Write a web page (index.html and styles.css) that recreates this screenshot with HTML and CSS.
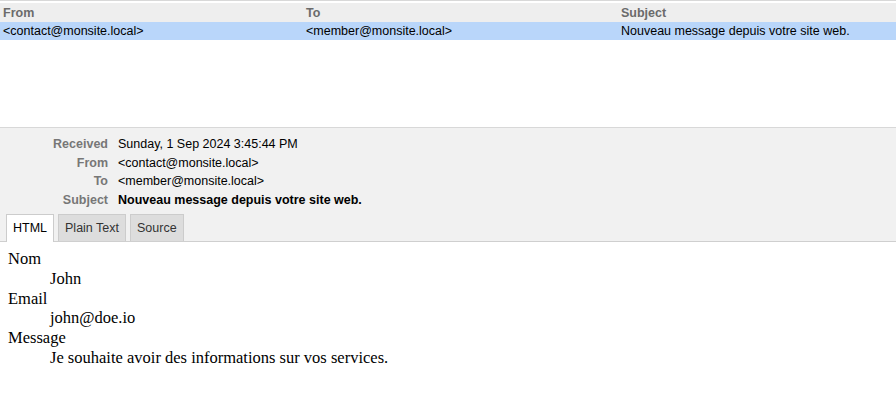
FILE: index.html
```html
<!DOCTYPE html>
<html>
<head>
<meta charset="utf-8">
<link rel="stylesheet" href="styles.css">
</head>
<body>
<div class="list">
  <div class="list-head">
    <div class="col c-from">From</div>
    <div class="col c-to">To</div>
    <div class="col c-subj">Subject</div>
  </div>
  <div class="list-row selected">
    <div class="col c-from">&lt;contact@monsite.local&gt;</div>
    <div class="col c-to">&lt;member@monsite.local&gt;</div>
    <div class="col c-subj">Nouveau message depuis votre site web.</div>
  </div>
</div>
<div class="details">
  <div class="meta">
    <div class="label">Received</div><div class="value">Sunday, 1 Sep 2024 3:45:44 PM</div>
    <div class="label">From</div><div class="value">&lt;contact@monsite.local&gt;</div>
    <div class="label">To</div><div class="value">&lt;member@monsite.local&gt;</div>
    <div class="label">Subject</div><div class="value strong">Nouveau message depuis votre site web.</div>
  </div>
  <div class="tabs">
    <div class="tab active">HTML</div>
    <div class="tab">Plain Text</div>
    <div class="tab">Source</div>
  </div>
</div>
<div class="body">
  <dl>
    <dt>Nom</dt>
    <dd>John</dd>
    <dt>Email</dt>
    <dd>john@doe.io</dd>
    <dt>Message</dt>
    <dd>Je souhaite avoir des informations sur vos services.</dd>
  </dl>
</div>
</body>
</html>
```
FILE: styles.css
```css
html, body {
  margin: 0;
  padding: 0;
  background: #fff;
}
body {
  width: 896px;
  height: 408px;
  overflow: hidden;
  font-family: "Liberation Sans", Arial, sans-serif;
  font-size: 12.5px;
  color: #000;
}
.list {
  height: 127px;
  border-top: 1px solid #d8d8d8;
  padding-top: 2px;
  box-sizing: border-box;
  background: #fff;
}
.list-head, .list-row {
  display: flex;
  height: 19px;
  align-items: center;
}
.list-head {
  background: #eeeeee;
  font-weight: bold;
  color: #6b6b6b;
}
.list-row.selected {
  background: #b9d6fa;
  height: 18px;
}
.col {
  padding-left: 3px;
  white-space: nowrap;
  overflow: hidden;
}
.c-from { width: 300px; }
.c-to { width: 312px; }
.c-subj { flex: 1; }
.details {
  background: #f1f1f1;
  border-top: 1px solid #d8d8d8;
  border-bottom: 1px solid #cfcfcf;
  padding-top: 7px;
  height: 115px;
  box-sizing: border-box;
  display: flex;
  flex-direction: column;
}
.meta {
  display: grid;
  grid-template-columns: 108px 1fr;
  column-gap: 10px;
  row-gap: 0;
  line-height: 18.5px;
}
.label {
  text-align: right;
  font-weight: bold;
  color: #777;
}
.value.strong {
  font-weight: bold;
}
.tabs {
  display: flex;
  gap: 4px;
  padding-left: 6px;
  margin-top: auto;
}
.tab {
  height: 26px;
  line-height: 26px;
  padding: 0 6px;
  background: #dddddd;
  border: 1px solid #cccccc;
  border-bottom: none;
  color: #333;
}
.tab.active {
  background: #fff;
  color: #000;
  height: 27px;
  margin-bottom: -1px;
}
.body {
  padding: 0 8px;
  font-family: "Liberation Serif", "Times New Roman", serif;
  font-size: 16.5px;
}
.body dl {
  margin: 7px 0 0;
  line-height: 19.8px;
}
.body dd {
  margin-left: 42px;
}
```
